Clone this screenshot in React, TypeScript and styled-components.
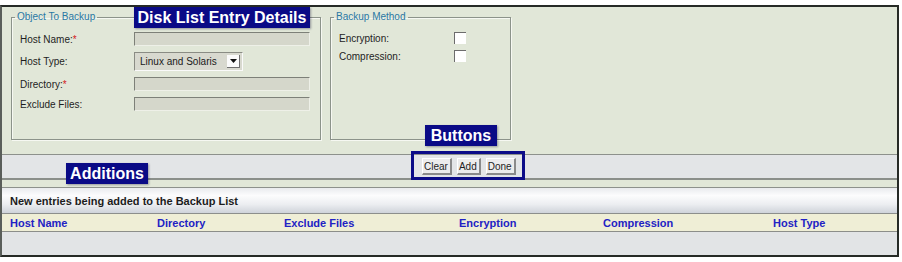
import React from 'react';
import styled, { createGlobalStyle } from 'styled-components';

const GlobalStyle = createGlobalStyle`
  body {
    margin: 0;
    background: #fff;
    font-family: 'Liberation Sans', Arial, sans-serif;
  }
`;

const columns = [
  { title: 'Host Name', width: '147px' },
  { title: 'Directory', width: '127px' },
  { title: 'Exclude Files', width: '175px' },
  { title: 'Encryption', width: '144px' },
  { title: 'Compression', width: '170px' },
  { title: 'Host Type', width: '1fr' },
];

const App: React.FC = () => {
  return (
    <>
      <GlobalStyle />
      <Frame>
        <TopSection>
          <FieldGroup $width={310}>
            <Legend>Object To Backup</Legend>
            <Row>
              <Label>
                Host Name:<Required>*</Required>
              </Label>
              <TextField />
            </Row>
            <Row>
              <Label>Host Type:</Label>
              <SelectBox>
                <SelectText>Linux and Solaris</SelectText>
                <SelectArrow>
                  <svg width="7" height="4" viewBox="0 0 7 4">
                    <path d="M0 0h7L3.5 4z" fill="#111" />
                  </svg>
                </SelectArrow>
              </SelectBox>
            </Row>
            <Row>
              <Label>
                Directory:<Required>*</Required>
              </Label>
              <TextField />
            </Row>
            <Row>
              <Label>Exclude Files:</Label>
              <TextField />
            </Row>
          </FieldGroup>
          <FieldGroup $width={181}>
            <Legend>Backup Method</Legend>
            <Row>
              <Label>Encryption:</Label>
              <CheckBox />
            </Row>
            <Row>
              <Label>Compression:</Label>
              <CheckBox />
            </Row>
          </FieldGroup>
        </TopSection>

        <ButtonBar>
          <ButtonGroup>
            <Button>Clear</Button>
            <Button>Add</Button>
            <Button>Done</Button>
          </ButtonGroup>
        </ButtonBar>
        <Divider />

        <ListTitle>New entries being added to the Backup List</ListTitle>
        <ColumnHeader>
          {columns.map((col) => (
            <ColumnTitle key={col.title}>{col.title}</ColumnTitle>
          ))}
        </ColumnHeader>
        <EmptyRows />

        <Callout $left={132} $top={0} $width={176}>
          Disk List Entry Details
        </Callout>
        <Callout $left={423} $top={118} $width={72}>
          Buttons
        </Callout>
        <Callout $left={64} $top={156} $width={82}>
          Additions
        </Callout>
      </Frame>
    </>
  );
};

const Frame = styled.div`
  position: relative;
  box-sizing: border-box;
  width: 899px;
  height: 252px;
  margin-top: 5px;
  border: 2px solid #262a26;
  border-left-color: #5a5e5a;
  display: flex;
  flex-direction: column;
`;

const TopSection = styled.div`
  box-sizing: border-box;
  height: 147px;
  padding: 4px 0 0 9px;
  display: flex;
  align-items: flex-start;
  gap: 9px;
  background: #e1e7d8;
`;

const FieldGroup = styled.fieldset<{ $width: number }>`
  box-sizing: border-box;
  width: ${(p) => p.$width}px;
  height: 129px;
  margin: 0;
  padding: 9px 8px 0 8px;
  border: 1px solid #8c938a;
  box-shadow: 1px 1px 0 #f6f8f2, inset 1px 1px 0 #f6f8f2;
  min-width: 0;
`;

const Legend = styled.legend`
  margin-left: -5px;
  padding: 0 2px;
  font-size: 10px;
  line-height: 12px;
  color: #2a78a4;
`;

const Row = styled.div`
  display: flex;
  align-items: center;
  margin-bottom: 6px;
`;

const Label = styled.span`
  width: 114px;
  flex-shrink: 0;
  font-size: 10px;
  color: #1e1e1e;
`;

const Required = styled.span`
  color: #d42020;
`;

const TextField = styled.div`
  box-sizing: border-box;
  width: 176px;
  height: 14px;
  background: #d5d7cb;
  border-top: 1px solid #7d8078;
  border-left: 1px solid #7d8078;
  border-right: 1px solid #eef0e8;
  border-bottom: 1px solid #eef0e8;
`;

const SelectBox = styled.div`
  box-sizing: border-box;
  width: 109px;
  height: 19px;
  display: flex;
  align-items: center;
  padding: 0 2px 0 5px;
  background: #d8d9cf;
  border-top: 1px solid #8a8c84;
  border-left: 1px solid #8a8c84;
  border-right: 1px solid #fafafa;
  border-bottom: 1px solid #fafafa;
`;

const SelectText = styled.span`
  flex: 1;
  font-size: 10px;
  color: #1a1a1a;
`;

const SelectArrow = styled.span`
  box-sizing: border-box;
  width: 13px;
  height: 13px;
  display: flex;
  align-items: center;
  justify-content: center;
  background: #fbfbfb;
  border-right: 1px solid #6f6f6f;
  border-bottom: 1px solid #6f6f6f;
`;

const CheckBox = styled.span`
  box-sizing: border-box;
  width: 12px;
  height: 12px;
  margin-left: 1px;
  background: #fff;
  border-top: 1px solid #6c6c6c;
  border-left: 1px solid #6c6c6c;
`;

const ButtonBar = styled.div`
  box-sizing: border-box;
  height: 26px;
  padding-left: 420px;
  display: flex;
  align-items: center;
  background: #e3e5e7;
  border-top: 1px solid #8d918c;
  border-bottom: 2px solid #8b8f8a;
`;

const ButtonGroup = styled.div`
  position: relative;
  display: flex;
  gap: 5px;

  &::before {
    content: '';
    position: absolute;
    top: -7px;
    left: -11px;
    right: -9px;
    bottom: -5px;
    border: 3px solid #0c0c88;
  }
`;

const Button = styled.button`
  height: 17px;
  margin: 0;
  padding: 0 2px 0 1px;
  font-family: 'Liberation Sans', Arial, sans-serif;
  font-size: 10px;
  color: #1e1e1e;
  background: #ececec;
  border: none;
  border-top: 1px solid #fff;
  border-left: 1px solid #fff;
  border-right: 2px solid #8a8a8a;
  border-bottom: 2px solid #8a8a8a;
`;

const Divider = styled.div`
  height: 7px;
  background: #e1e7d8;
  border-bottom: 1px solid #8d918c;
`;

const ListTitle = styled.div`
  box-sizing: border-box;
  height: 26px;
  padding-left: 8px;
  display: flex;
  align-items: center;
  font-size: 11px;
  font-weight: bold;
  color: #1c1c1c;
  background: linear-gradient(#e9ebee, #fcfcfd 30%, #eceef1 65%, #cfd3da);
  border-bottom: 1px solid #8c8e8c;
`;

const ColumnHeader = styled.div`
  box-sizing: border-box;
  height: 18px;
  padding-left: 8px;
  display: grid;
  grid-template-columns: ${columns.map((c) => c.width).join(' ')};
  align-items: center;
  background: #efeed6;
  border-bottom: 1px solid #8c8e8a;
`;

const ColumnTitle = styled.span`
  font-size: 11px;
  font-weight: bold;
  color: #2222c4;
`;

const EmptyRows = styled.div`
  flex: 1;
  background: #e2e4e6;
`;

const Callout = styled.div<{ $left: number; $top: number; $width: number }>`
  position: absolute;
  left: ${(p) => p.$left}px;
  top: ${(p) => p.$top}px;
  width: ${(p) => p.$width}px;
  height: 21px;
  display: flex;
  align-items: center;
  justify-content: center;
  font-size: 16px;
  font-weight: bold;
  color: #fff;
  background: #0a0a86;
  box-shadow: 1px 1px 2px rgba(0, 0, 40, 0.35);
`;

export default App;
